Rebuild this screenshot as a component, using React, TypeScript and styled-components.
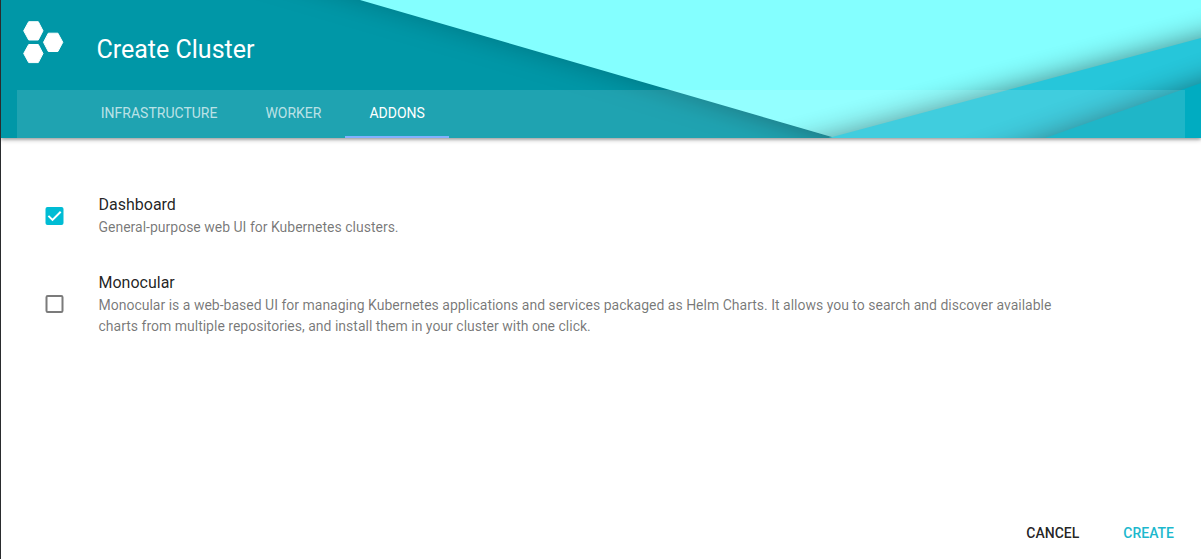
import React, { useState } from "react";
import styled, { createGlobalStyle } from "styled-components";

const GlobalStyle = createGlobalStyle`
  * { box-sizing: border-box; }
  body { margin: 0; background: #fff; font-family: Roboto, "Liberation Sans", sans-serif; }
  button { font-family: inherit; border: 0; background: none; padding: 0; cursor: pointer; }
`;

const Page = styled.div`
  display: flex;
  flex-direction: column;
  height: 559px;
  border-left: 1px solid #2a2c2e;
  overflow: hidden;
`;

const Header = styled.header`
  position: relative;
  flex: none;
  display: flex;
  flex-direction: column;
  height: 138px;
  background: #0097a7;
  box-shadow: 0 1px 5px rgba(0, 0, 0, 0.4), 0 2px 2px rgba(0, 0, 0, 0.1);
`;

const Artwork = styled.svg`
  position: absolute;
  inset: 0;
  width: 1200px;
  height: 138px;
`;

const TitleRow = styled.div`
  position: relative;
  display: flex;
  height: 90px;
  padding: 21px 0 0 21.5px;
`;

const Logo = styled.svg`
  width: 41px;
  height: 43px;
`;

const Title = styled.h1`
  margin: 13px 0 0 33px;
  font-size: 25px;
  line-height: 32px;
  font-weight: 400;
  letter-spacing: 0;
  color: #fff;
`;

const TabBar = styled.nav`
  position: relative;
  display: flex;
  height: 48px;
  margin: 0 16px;
  padding-left: 59.8px;
  background: rgba(255, 255, 255, 0.12);
`;

const Tab = styled.button<{ $active: boolean }>`
  height: 48px;
  padding: 0 24px;
  border-bottom: 2px solid ${(p) => (p.$active ? "#82b1ff" : "transparent")};
  font-size: 14px;
  line-height: 46px;
  letter-spacing: 0;
  color: ${(p) => (p.$active ? "#fff" : "rgba(255, 255, 255, 0.7)")};
`;

const AddonList = styled.main`
  flex: 1;
  padding: 56px 0 0 44px;
`;

const AddonRow = styled.label`
  display: flex;
  align-items: center;
  margin-bottom: 34px;
`;

const Check = styled.svg`
  flex: none;
  width: 19px;
  height: 18px;
  margin: 0 34px 0.5px 0;
`;

const AddonText = styled.div`
  width: 965px;
  padding-left: 0.5px;
`;

const AddonName = styled.h3`
  margin: 0 0 1px;
  font-size: 16px;
  line-height: 22px;
  font-weight: 400;
  letter-spacing: 0;
  color: rgba(0, 0, 0, 0.87);
`;

const AddonInfo = styled.p`
  margin: 0;
  font-size: 14px;
  line-height: 21px;
  letter-spacing: 0;
  color: rgba(0, 0, 0, 0.54);
`;

const Actions = styled.footer`
  display: flex;
  justify-content: flex-end;
  gap: 44px;
  padding: 0 27px 8px 0;
`;

const Action = styled.button<{ $primary?: boolean }>`
  height: 36px;
  font-size: 14px;
  font-weight: 500;
  letter-spacing: 0;
  color: ${(p) => (p.$primary ? "#1cb8cd" : "rgba(0, 0, 0, 0.87)")};
`;

const tabs = ["INFRASTRUCTURE", "WORKER", "ADDONS"];

const addons = [
  { name: "Dashboard", info: "General-purpose web UI for Kubernetes clusters." },
  {
    name: "Monocular",
    info: "Monocular is a web-based UI for managing Kubernetes applications and services packaged as Helm Charts. It allows you to search and discover available charts from multiple repositories, and install them in your cluster with one click.",
  },
];

const HeaderArt = () => (
  <Artwork viewBox="1 0 1200 138" aria-hidden="true">
    <defs>
      <filter id="soft" filterUnits="userSpaceOnUse" x="-100" y="-150" width="1500" height="450">
        <feGaussianBlur stdDeviation="14" />
      </filter>
      <linearGradient id="tealShade" gradientUnits="userSpaceOnUse" x1="300" y1="0" x2="840" y2="0">
        <stop offset="0" stopColor="#000" stopOpacity=".2" />
        <stop offset=".6" stopColor="#000" stopOpacity=".24" />
        <stop offset="1" stopColor="#000" stopOpacity=".46" />
      </linearGradient>
      <clipPath id="paleClip"><path d="M360 0 L835.4 138 H1201 V0Z" /></clipPath>
      <clipPath id="cyanClip"><path d="M828.6 138 L1201 38 V138Z" /></clipPath>
    </defs>
    <path d="M15.5 -100 L360 0 L832 137 L1300 273 V-150 H15Z" fill="url(#tealShade)" filter="url(#soft)" />
    <path d="M360 0 L835.4 138 H1201 V0Z" fill="#84ffff" />
    <g clipPath="url(#paleClip)">
      <path d="M600 199.6 L828.6 138 L1201 38 L1400 -15 V300 H600Z" fill="#000" opacity=".48" filter="url(#soft)" />
    </g>
    <path d="M828.6 138 L1201 38 V138Z" fill="#26c6da" />
    <g clipPath="url(#cyanClip)">
      <path d="M800 224 L1045 138 L1201 83 L1400 13 V300 H800Z" fill="#000" opacity=".42" filter="url(#soft)" />
    </g>
    <path d="M1045 138 L1201 83 V138Z" fill="#00acc1" />
  </Artwork>
);

const CheckMark = ({ checked }: { checked: boolean }) => (
  <Check viewBox="0 0 19 18">
    {checked ? (
      <>
        <rect x=".5" y="0" width="18" height="18" rx="2" fill="#00bcd4" />
        <path d="M3.4 8.9 L7.5 12.9 L15.7 4.7" fill="none" stroke="#fff" strokeWidth="2" />
      </>
    ) : (
      <rect x="1.5" y="1" width="16" height="16" rx="1.2" fill="none" stroke="#7b7b7b" strokeWidth="2" />
    )}
  </Check>
);

export default function App() {
  const [active, setActive] = useState("ADDONS");
  const [selected, setSelected] = useState(["Dashboard"]);
  const toggle = (name: string) =>
    setSelected((s) => (s.includes(name) ? s.filter((n) => n !== name) : [...s, name]));

  return (
    <Page>
      <GlobalStyle />
      <Header>
        <HeaderArt />
        <TitleRow>
          <Logo viewBox="0 0 41 43" fill="#fff" stroke="#fff" strokeWidth="1" strokeLinejoin="round">
            <path d="M5.7 .7 H15.3 L20 9.8 L15.3 19 H5.7 L.7 9.8Z" />
            <path d="M25.3 12.2 H34.9 L39.8 21.3 L34.9 30.5 H25.3 L20.5 21.3Z" />
            <path d="M5.7 23.5 H15.3 L20 32.5 L15.3 41.6 H5.7 L.7 32.5Z" />
          </Logo>
          <Title>Create Cluster</Title>
        </TitleRow>
        <TabBar>
          {tabs.map((t) => (
            <Tab key={t} $active={t === active} onClick={() => setActive(t)}>
              {t}
            </Tab>
          ))}
        </TabBar>
      </Header>
      <AddonList>
        {addons.map((a) => (
          <AddonRow key={a.name} onClick={() => toggle(a.name)}>
            <CheckMark checked={selected.includes(a.name)} />
            <AddonText>
              <AddonName>{a.name}</AddonName>
              <AddonInfo>{a.info}</AddonInfo>
            </AddonText>
          </AddonRow>
        ))}
      </AddonList>
      <Actions>
        <Action>CANCEL</Action>
        <Action $primary>CREATE</Action>
      </Actions>
    </Page>
  );
}
